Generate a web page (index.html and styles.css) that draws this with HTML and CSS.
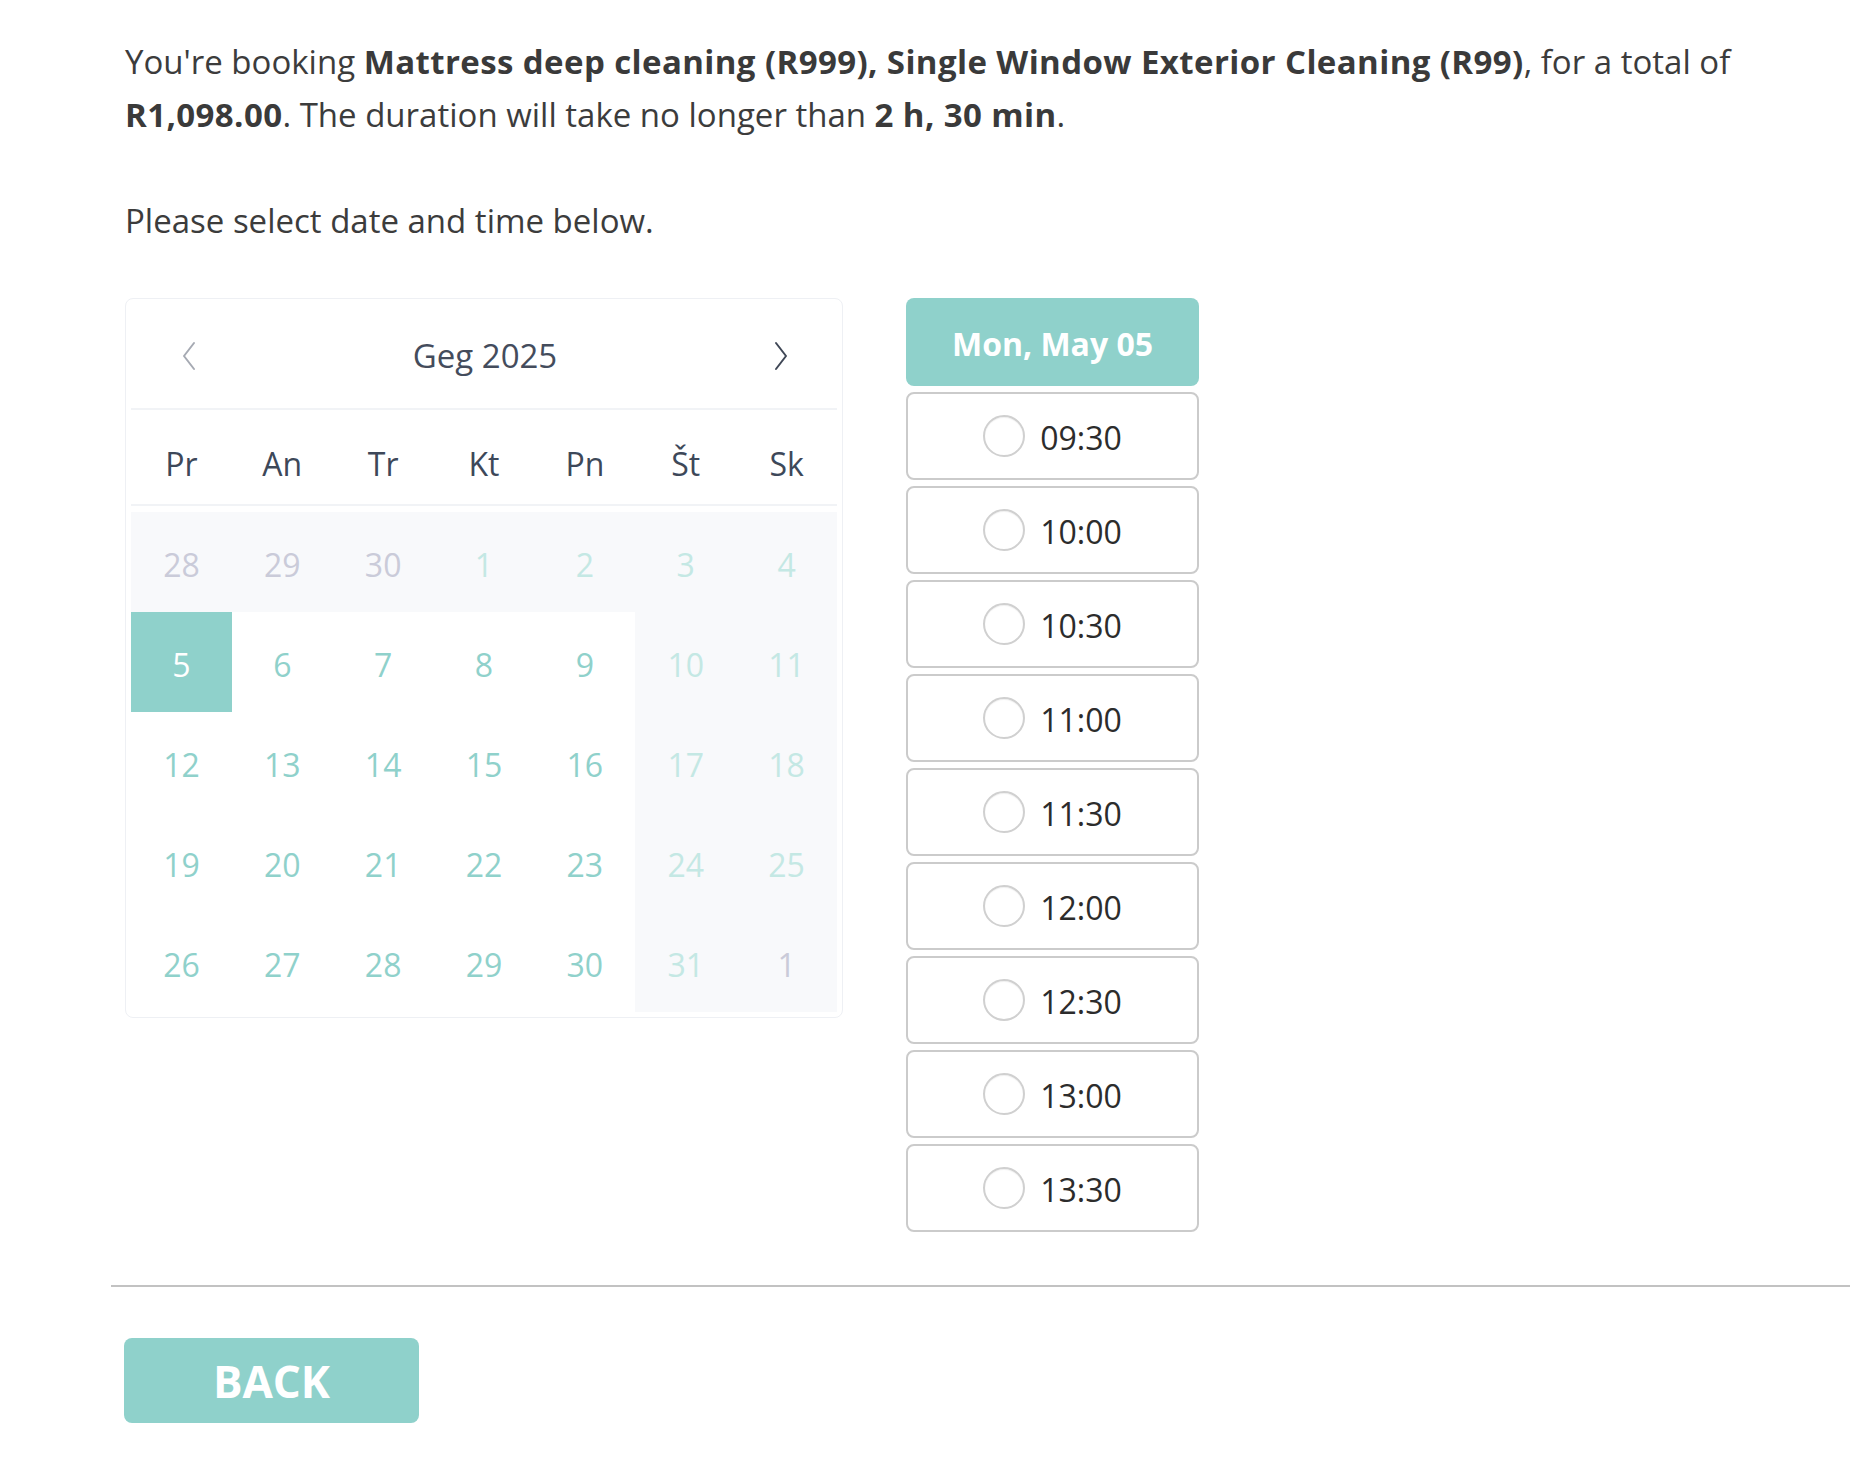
FILE: index.html
```html
<!DOCTYPE html>
<html lang="en">
<head>
<meta charset="utf-8">
<title>Booking</title>
<link rel="stylesheet" href="styles.css">
</head>
<body>
<div class="page">
  <div class="content">
    <p class="summary">You're booking <b>Mattress deep cleaning (R999), Single Window Exterior Cleaning (R99)</b>, for a total of <b>R1,098.00</b>. The duration will take no longer than <b>2 h, 30 min</b>.</p>
    <p class="prompt">Please select date and time below.</p>

    <div class="picker">
      <div class="calendar">
        <div class="cal-head">
          <button class="nav nav-prev" aria-label="Previous month">
            <svg viewBox="0 0 16 30" width="16" height="30"><path d="M13 2 L3 15 L13 28" fill="none" stroke="currentColor" stroke-width="2" stroke-linecap="round" stroke-linejoin="round"/></svg>
          </button>
          <span class="month">Geg 2025</span>
          <button class="nav nav-next" aria-label="Next month">
            <svg viewBox="0 0 16 30" width="16" height="30"><path d="M3 2 L13 15 L3 28" fill="none" stroke="currentColor" stroke-width="2" stroke-linecap="round" stroke-linejoin="round"/></svg>
          </button>
        </div>
        <div class="weekdays">
          <span>Pr</span><span>An</span><span>Tr</span><span>Kt</span><span>Pn</span><span>Št</span><span>Sk</span>
        </div>
        <div class="days">
          <span class="day other off">28</span>
          <span class="day other off">29</span>
          <span class="day other off">30</span>
          <span class="day off">1</span>
          <span class="day off">2</span>
          <span class="day off">3</span>
          <span class="day off">4</span>

          <span class="day selected">5</span>
          <span class="day">6</span>
          <span class="day">7</span>
          <span class="day">8</span>
          <span class="day">9</span>
          <span class="day off">10</span>
          <span class="day off">11</span>

          <span class="day">12</span>
          <span class="day">13</span>
          <span class="day">14</span>
          <span class="day">15</span>
          <span class="day">16</span>
          <span class="day off">17</span>
          <span class="day off">18</span>

          <span class="day">19</span>
          <span class="day">20</span>
          <span class="day">21</span>
          <span class="day">22</span>
          <span class="day">23</span>
          <span class="day off">24</span>
          <span class="day off">25</span>

          <span class="day">26</span>
          <span class="day">27</span>
          <span class="day">28</span>
          <span class="day">29</span>
          <span class="day">30</span>
          <span class="day off">31</span>
          <span class="day other off">1</span>
        </div>
      </div>

      <div class="slots">
        <div class="slot-head">Mon, May 05</div>
        <label class="slot"><span class="radio"></span><span class="time">09:30</span></label>
        <label class="slot"><span class="radio"></span><span class="time">10:00</span></label>
        <label class="slot"><span class="radio"></span><span class="time">10:30</span></label>
        <label class="slot"><span class="radio"></span><span class="time">11:00</span></label>
        <label class="slot"><span class="radio"></span><span class="time">11:30</span></label>
        <label class="slot"><span class="radio"></span><span class="time">12:00</span></label>
        <label class="slot"><span class="radio"></span><span class="time">12:30</span></label>
        <label class="slot"><span class="radio"></span><span class="time">13:00</span></label>
        <label class="slot"><span class="radio"></span><span class="time">13:30</span></label>
      </div>
    </div>
  </div>

  <hr class="divider">

  <div class="actions">
    <button class="back">BACK</button>
  </div>
</div>
</body>
</html>
```

FILE: styles.css
```css
* {
  box-sizing: border-box;
}

html, body {
  margin: 0;
  padding: 0;
  background: #ffffff;
}

body {
  font-family: "Open Sans", "Noto Sans", sans-serif;
  color: #3c3c3c;
}

.page {
  padding-left: 111px;
}

.content {
  padding: 0 14px;
}

.summary,
.prompt {
  margin: 0;
  font-size: 33px;
  line-height: 53px;
  color: #3c3c3c;
}

.summary {
  padding-top: 35px;
}

.summary b {
  font-weight: 700;
  color: #3a3a3a;
  letter-spacing: 0.4px;
}

.prompt {
  margin-top: 53px;
}

.picker {
  display: flex;
  align-items: flex-start;
  gap: 63px;
  margin-top: 51px;
}

/* Calendar */
.calendar {
  width: 718px;
  border: 1px solid #eef0f4;
  border-radius: 8px;
  padding: 0 5px 5px;
  background: #fff;
}

.cal-head {
  height: 111px;
  display: flex;
  align-items: center;
  justify-content: space-between;
  padding: 4px 46px 0 48px;
  border-bottom: 2px solid #f1f3f6;
}

.nav {
  border: 0;
  background: none;
  padding: 0;
  width: 20px;
  height: 30px;
  display: flex;
  align-items: center;
  justify-content: center;
  cursor: pointer;
}

.nav-prev {
  color: #a6aab3;
}

.nav-next {
  color: #3f4756;
}

.month {
  font-size: 33px;
  color: #444c5c;
}

.weekdays {
  height: 96px;
  display: grid;
  grid-template-columns: repeat(7, 1fr);
  align-items: center;
  border-bottom: 2px solid #f1f3f6;
  padding-top: 12px;
}

.weekdays span {
  text-align: center;
  font-size: 32px;
  color: #3d4859;
}

.days {
  margin-top: 6px;
  display: grid;
  grid-template-columns: repeat(7, 1fr);
  grid-auto-rows: 100px;
}

.day {
  display: flex;
  align-items: center;
  justify-content: center;
  padding-top: 4px;
  font-size: 32px;
  color: #8fd1cb;
}

.day.off {
  background: #f8f9fb;
  color: #c4e8e4;
}

.day.other {
  color: #cacbd9;
}

.day.selected {
  background: #8fd1cb;
  color: #ffffff;
}

/* Time slots */
.slots {
  width: 293px;
  display: flex;
  flex-direction: column;
  gap: 6px;
}

.slot-head {
  height: 88px;
  border-radius: 8px;
  background: #8fd1cb;
  color: #ffffff;
  font-weight: 700;
  font-size: 32px;
  padding-top: 3px;
  display: flex;
  align-items: center;
  justify-content: center;
}

.slot {
  height: 88px;
  border: 2px solid #cbcbcb;
  border-radius: 8px;
  display: flex;
  align-items: center;
  justify-content: center;
  gap: 15px;
  cursor: pointer;
}

.radio {
  width: 42px;
  height: 42px;
  border-radius: 50%;
  border: 2px solid #d0d0d0;
  background: #fff;
  box-shadow: inset 0 1px 1px rgba(0, 0, 0, 0.06);
}

.time {
  font-size: 32px;
  color: #2c2c2c;
  padding-top: 2px;
}

/* Footer */
.divider {
  margin: 53px 0 0;
  border: 0;
  border-top: 2px solid #c2c2c2;
  height: 0;
}

.actions {
  padding: 51px 13px 0;
}

.back {
  width: 295px;
  height: 85px;
  border: 0;
  border-radius: 8px;
  background: #8fd1cb;
  color: #ffffff;
  font-family: "Open Sans", "Noto Sans", sans-serif;
  font-weight: 700;
  font-size: 44px;
  padding-top: 2px;
  cursor: pointer;
}
```
